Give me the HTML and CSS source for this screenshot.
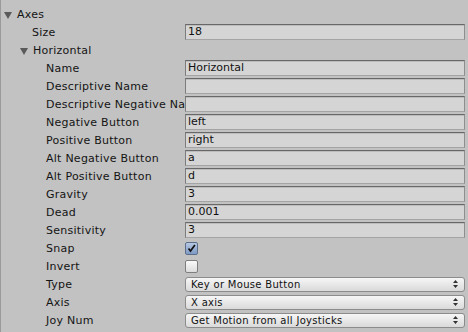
FILE: index.html
```html
<!DOCTYPE html>
<html lang="en">
<head>
  <meta charset="UTF-8" />
  <title>Input Manager</title>
  <link rel="stylesheet" href="styles.css">
</head>
<body>

<div class="inspector">
  <div class="row">
    <div class="label lvl0"><span class="fold"></span>Axes</div>
  </div>
  <div class="row">
    <div class="label lvl1">Size</div>
    <div class="field"><div class="text">18</div></div>
  </div>
  <div class="row">
    <div class="label lvl1 foldout"><span class="fold"></span>Horizontal</div>
  </div>

  <div class="row"><div class="label lvl2">Name</div><div class="field"><div class="text">Horizontal</div></div></div>
  <div class="row"><div class="label lvl2">Descriptive Name</div><div class="field"><div class="text"></div></div></div>
  <div class="row"><div class="label lvl2">Descriptive Negative Na</div><div class="field"><div class="text"></div></div></div>
  <div class="row"><div class="label lvl2">Negative Button</div><div class="field"><div class="text">left</div></div></div>
  <div class="row"><div class="label lvl2">Positive Button</div><div class="field"><div class="text">right</div></div></div>
  <div class="row"><div class="label lvl2">Alt Negative Button</div><div class="field"><div class="text">a</div></div></div>
  <div class="row"><div class="label lvl2">Alt Positive Button</div><div class="field"><div class="text">d</div></div></div>
  <div class="row"><div class="label lvl2">Gravity</div><div class="field"><div class="text">3</div></div></div>
  <div class="row"><div class="label lvl2">Dead</div><div class="field"><div class="text">0.001</div></div></div>
  <div class="row"><div class="label lvl2">Sensitivity</div><div class="field"><div class="text">3</div></div></div>
  <div class="row">
    <div class="label lvl2">Snap</div>
    <div class="field"><span class="check on">
      <svg width="13" height="13" viewBox="0 0 13 13"><path d="M3 6.5 L5.3 9.5 L10.5 2.5" fill="none" stroke="#111" stroke-width="2"/></svg>
    </span></div>
  </div>
  <div class="row"><div class="label lvl2">Invert</div><div class="field"><span class="check"></span></div></div>
  <div class="row"><div class="label lvl2">Type</div><div class="field"><div class="popup">Key or Mouse Button<svg class="arrows" width="5" height="8" viewBox="0 0 5 8"><path d="M2.5 0 L5 3 L0 3 Z M0 5 L5 5 L2.5 8 Z" fill="#333"/></svg></div></div></div>
  <div class="row"><div class="label lvl2">Axis</div><div class="field"><div class="popup">X axis<svg class="arrows" width="5" height="8" viewBox="0 0 5 8"><path d="M2.5 0 L5 3 L0 3 Z M0 5 L5 5 L2.5 8 Z" fill="#333"/></svg></div></div></div>
  <div class="row"><div class="label lvl2">Joy Num</div><div class="field"><div class="popup">Get Motion from all Joysticks<svg class="arrows" width="5" height="8" viewBox="0 0 5 8"><path d="M2.5 0 L5 3 L0 3 Z M0 5 L5 5 L2.5 8 Z" fill="#333"/></svg></div></div></div>
</div>

</body>
</html>
```

FILE: styles.css
```css
body {
  margin: 0;
  background: #c2c2c2;
  font-family: 'DejaVu Sans', sans-serif;
  font-size: 11px;
  color: #111;
}
.inspector {
  height: 332px;
  padding-top: 5px;
  box-sizing: border-box;
  border-left: 1px solid #9a9a9a;
}
.row {
  display: flex;
  align-items: center;
  height: 18px;
}
.label {
  flex: 0 0 auto;
  width: 184px;
  box-sizing: border-box;
  white-space: nowrap;
  overflow: hidden;
  color: #141414;
  letter-spacing: 0.25px;
}
.lvl0 { padding-left: 3px; }
.lvl1 { padding-left: 31px; }
.lvl1.foldout { padding-left: 19px; }
.lvl2 { padding-left: 45px; }
.fold {
  display: inline-block;
  width: 0;
  height: 0;
  border-left: 4px solid transparent;
  border-right: 4px solid transparent;
  border-top: 7px solid #5a5a5a;
  margin-right: 5px;
  vertical-align: -1px;
}
.field {
  flex: 1;
  margin-right: 3px;
  display: flex;
  align-items: center;
}
.text {
  flex: 1;
  height: 16px;
  box-sizing: border-box;
  background: #d5d5d5;
  border: 1px solid #a4a4a4;
  border-top-color: #686868;
  border-left-color: #7c7c7c;
  border-right-color: #8e8e8e;
  padding: 0 2px;
  line-height: 14px;
  box-shadow: inset 0 1px 0 #bdbdbd;
}
.check {
  width: 13px;
  height: 13px;
  box-sizing: border-box;
  border: 1px solid #7e7e7e;
  border-radius: 2px;
  background: linear-gradient(#fafafa, #dcdcdc);
  display: flex;
  align-items: center;
  justify-content: center;
}
.check.on {
  background: linear-gradient(#b6c8e2, #7e9ac4);
  border-color: #5b6f8c;
}
.popup {
  flex: 1;
  height: 15px;
  box-sizing: border-box;
  border: 1px solid #8c8c8c;
  border-radius: 3px;
  background: linear-gradient(#f6f6f6, #dadada);
  padding-left: 5px;
  line-height: 13px;
  font-size: 10px;
  letter-spacing: 0.3px;
  display: flex;
  align-items: center;
  justify-content: space-between;
}
.arrows {
  margin-right: 6px;
}
```
